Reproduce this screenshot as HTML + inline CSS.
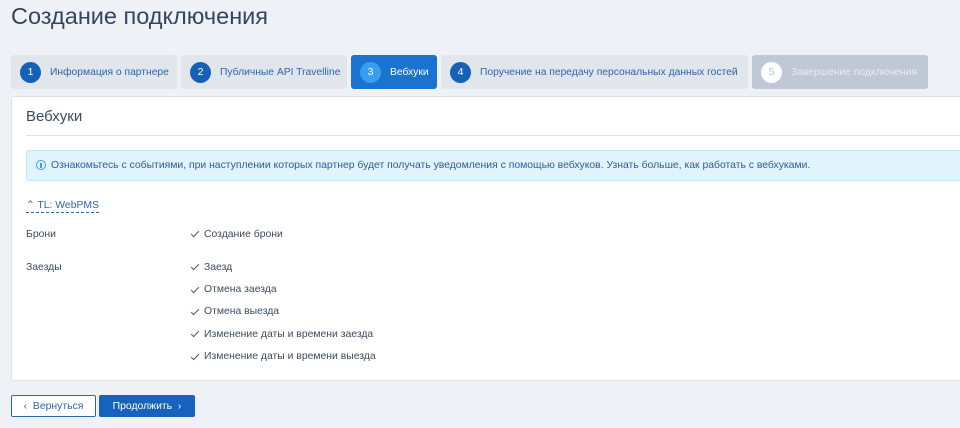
<!DOCTYPE html>
<html><head><meta charset="utf-8"><style>
*{box-sizing:border-box;margin:0;padding:0}
body{width:960px;height:428px;overflow:hidden;background:#eef1f5;font-family:"Liberation Sans",sans-serif;color:#3d4b5c;position:relative}
.abs{position:absolute}
h1{position:absolute;left:11px;top:3px;font-size:23.5px;font-weight:normal;color:#34465c}
.tab{position:absolute;top:55px;height:34px;background:#e1e5ec;border-radius:3px;font-size:10.3px;color:#2d66a8;display:flex;align-items:center;white-space:nowrap;padding-top:1px}
.num{width:21px;height:21px;border-radius:50%;background:#1660b8;color:#fff;font-size:10.5px;display:flex;align-items:center;justify-content:center;margin:-1px 9px 0 9px;flex:none}
.card{position:absolute;left:11px;top:96px;width:960px;height:285px;background:#fff;border:1px solid #dfe3e8;border-radius:3px}
.row{position:absolute;font-size:10.4px;color:#3d4b5c}
.chk{position:absolute;left:191px;width:8px;height:4px;border-left:1.2px solid #4a5a6c;border-bottom:1.2px solid #4a5a6c;transform:rotate(-45deg)}
</style></head><body>
<h1>Создание подключения</h1>
<div class="tab" style="left:11px;width:166px"><div class="num">1</div>Информация о партнере</div>
<div class="tab" style="left:181px;width:166px"><div class="num">2</div>Публичные API Travelline</div>
<div class="tab" style="left:351px;width:86px;background:#1a73d0;color:#fff"><div class="num" style="background:#3a9ef0">3</div>Вебхуки</div>
<div class="tab" style="left:441px;width:307px"><div class="num">4</div>Поручение на передачу персональных данных гостей</div>
<div class="tab" style="left:752px;width:176px;background:#c0c8d6;color:#e8ecf2"><div class="num" style="background:#fff;color:#c0c8d6">5</div>Завершение подключения</div>
<div class="card"></div>
<div class="abs" style="left:26px;top:108px;font-size:15px;color:#3d4b5c">Вебхуки</div>
<div class="abs" style="left:26px;top:135px;width:934px;height:1px;background:#dfe4ea"></div>
<div class="abs" style="left:26px;top:150px;width:940px;height:31px;background:#e1f3fd;border:1px solid #c6e6fa;border-radius:3px"></div>
<div class="abs" style="left:36px;top:160px;width:10px;height:10px;border:1.3px solid #3a9ef0;border-radius:50%"></div>
<div class="abs" style="left:40.3px;top:162.5px;width:1.4px;height:5px;background:#3a9ef0"></div>
<div class="abs" style="left:51px;top:160px;font-size:10.4px;color:#2d5f94;white-space:nowrap">Ознакомьтесь с событиями, при наступлении которых партнер будет получать уведомления с помощью вебхуков. Узнать больше, как работать с вебхуками.</div>
<div class="abs" style="left:26px;top:199px;font-size:10.4px;color:#2d66a8;border-bottom:1px dashed #2d66a8;padding-bottom:1px;white-space:nowrap">⌃ TL: WebPMS</div>
<div class="row" style="left:26px;top:229px">Брони</div>
<div class="row" style="left:26px;top:262px">Заезды</div>
<div class="chk" style="top:231px"></div><div class="row" style="left:204px;top:229px">Создание брони</div>
<div class="chk" style="top:264px"></div><div class="row" style="left:204px;top:262px">Заезд</div>
<div class="chk" style="top:287px"></div><div class="row" style="left:204px;top:284px">Отмена заезда</div>
<div class="chk" style="top:309px"></div><div class="row" style="left:204px;top:306px">Отмена выезда</div>
<div class="chk" style="top:331px"></div><div class="row" style="left:204px;top:329px">Изменение даты и времени заезда</div>
<div class="chk" style="top:354px"></div><div class="row" style="left:204px;top:351px">Изменение даты и времени выезда</div>
<div class="abs" style="left:11px;top:395px;width:85px;height:22px;border:1px solid #2d66a8;border-radius:2px;background:#fff;font-size:10.4px;color:#2d66a8;display:flex;align-items:center;justify-content:center">‹&nbsp;&nbsp;Вернуться</div>
<div class="abs" style="left:99px;top:395px;width:96px;height:22px;border-radius:2px;background:#1762bd;font-size:10.4px;color:#fff;display:flex;align-items:center;justify-content:center">Продолжить&nbsp;&nbsp;›</div>
</body></html>
